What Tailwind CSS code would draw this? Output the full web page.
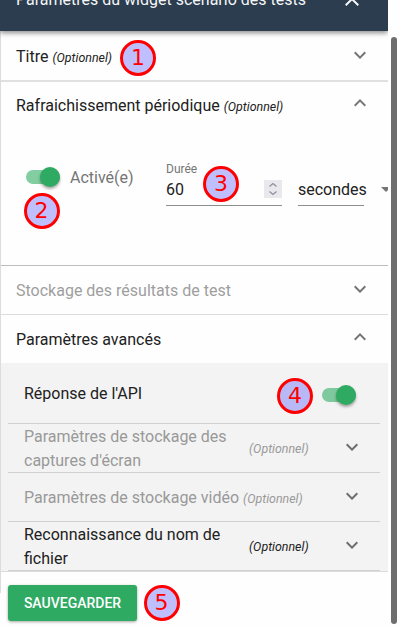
<!DOCTYPE html>
<html lang="fr">
<head>
<meta charset="utf-8">
<title>Paramètres du widget</title>
<script src="https://cdn.jsdelivr.net/npm/@tailwindcss/browser@4"></script>
</head>
<body class="bg-[#fefefe]">
<svg class="hidden">
  <symbol id="down" viewBox="0 0 24 24"><path d="M7.41 8.59 12 13.17l4.59-4.58L18 10l-6 6-6-6z"/></symbol>
  <symbol id="up" viewBox="0 0 24 24"><path d="M7.41 15.41 12 10.83l4.59 4.58L18 14l-6-6-6 6z"/></symbol>
</svg>
<div class="relative flex h-[627px] w-[400px] overflow-hidden font-['Roboto',sans-serif] text-base text-[#212121]">
  <div class="flex w-[388px] flex-col overflow-hidden">
    <header class="relative z-10 flex h-[31px] shrink-0 items-start justify-between bg-[#2b3d4f] pl-4 pr-[24px] text-[#f5f6f7] shadow-[0_2px_5px_rgba(0,0,0,.45)]">
      <h1 class="-mt-[12px] whitespace-nowrap text-base leading-6">Paramètres du widget scénario des tests</h1>
      <svg class="-mt-[13px] size-6 fill-current" viewBox="0 0 24 24"><path d="M19 6.41 17.59 5 12 10.59 6.41 5 5 6.41 10.59 12 5 17.59 6.41 19 12 13.41 17.59 19 19 17.59 13.41 12z"/></svg>
    </header>
    <main class="flex h-[562px] shrink-0 flex-col border-l border-[#dcdcdc]">
      <section class="flex h-[51px] shrink-0 items-center justify-between border-b-2 border-[#e0e0e0] pl-[15px] pr-4">
        <p class="pt-[3px]">Titre <i class="text-[12.4px] leading-4">(Optionnel)</i></p>
        <svg class="mb-px size-6 fill-[#757575]"><use href="#down"/></svg>
      </section>
      <section class="h-[184px] shrink-0 border-b border-[#bdbdbd] pl-[15px] pr-4">
        <div class="flex h-[46px] items-center justify-between">
          <p class="pt-[2px]">Rafraichissement périodique <i class="text-[12.4px] leading-4">(Optionnel)</i></p>
          <svg class="-mt-1 size-6 fill-[#757575]"><use href="#up"/></svg>
        </div>
        <div class="flex pt-[34px]">
          <div class="ml-[10px] mt-[5px] flex h-5 w-[140px] items-center">
            <span class="flex h-[14px] w-[34px] items-center justify-end rounded-full bg-[#82cda1]"><span class="size-5 shrink-0 rounded-full bg-[#2eaa62] shadow-[0_2px_3px_rgba(0,0,0,.35)]"></span></span>
            <span class="ml-[10px] pt-[2px] text-[#757575]">Activé(e)</span>
          </div>
          <div class="h-[44px] w-[116px] border-b border-[#8d8d8d]">
            <p class="text-xs leading-[14px] text-[#757575]">Durée</p>
            <div class="flex h-[26px] items-center justify-between"><span class="pt-[2px]">60</span>
              <svg class="h-[18px] w-[18px] bg-[#e9e9ed]" viewBox="0 0 18 18" fill="none" stroke="#8f8f9d" stroke-width="1.3"><path d="m5.5 6.5 3.5-3 3.5 3m-7 5 3.5 3 3.5-3"/></svg>
            </div>
          </div>
          <div class="ml-4 flex h-[44px] w-[66px] shrink-0 items-center border-b border-[#8d8d8d] pt-[12px]">
            <span class="pt-px">secondes</span>
            <svg class="ml-[14px] h-[5px] w-[10px] shrink-0 fill-[#757575]" viewBox="0 0 10 5"><path d="M0 0h10L5 5z"/></svg>
          </div>
        </div>
      </section>
      <section class="flex h-[49px] shrink-0 items-center justify-between border-b border-[#dcdcdc] pl-[15px] pr-4 text-[#9e9e9e]">
        <p class="pt-[2px]">Stockage des résultats de test</p>
        <svg class="mb-[2px] size-6 fill-[#757575]"><use href="#down"/></svg>
      </section>
      <section class="flex h-12 shrink-0 items-center justify-between pl-[15px] pr-4">
        <p class="pt-[2px]">Paramètres avancés</p>
        <svg class="-mt-1 size-6 fill-[#757575]"><use href="#up"/></svg>
      </section>
      <section class="h-[209px] shrink-0 border-b border-[#dcdcdc] bg-[#f3f3f3] pl-[7px] pr-2">
        <div class="flex h-[61px] items-center justify-between border-b border-[#d0d0d0] pl-4 pr-6">
          <p class="pt-[2px]">Réponse de l'API</p>
          <span class="mt-1 flex h-[14px] w-[34px] items-center justify-end rounded-full bg-[#7ec99d]"><span class="size-5 shrink-0 rounded-full bg-[#2eaa62] shadow-[0_2px_3px_rgba(0,0,0,.35)]"></span></span>
        </div>
        <div class="flex h-[49px] items-center border-b border-[#d0d0d0] pl-4 pr-4 text-[#999]">
          <p class="w-[225px] pt-[2px] leading-6">Paramètres de stockage des captures d'écran</p><i class="pt-[2px] text-[12.4px] leading-4">(Optionnel)</i>
          <svg class="mb-[2px] ml-auto size-6 fill-[#6d6d6d]"><use href="#down"/></svg>
        </div>
        <div class="flex h-[49px] items-center border-b border-[#d0d0d0] pl-4 pr-4 text-[#999]">
          <p class="whitespace-nowrap pt-[2px]">Paramètres de stockage vidéo <i class="text-[12.4px] leading-4">(Optionnel)</i></p>
          <svg class="mb-[2px] ml-auto size-6 fill-[#6d6d6d]"><use href="#down"/></svg>
        </div>
        <div class="flex h-[49px] items-center border-b border-[#d0d0d0] pl-4 pr-4">
          <p class="w-[225px] pt-[2px] leading-6">Reconnaissance du nom de fichier</p><i class="pt-[2px] text-[12.4px] leading-4">(Optionnel)</i>
          <svg class="mb-[2px] ml-auto size-6 fill-[#6d6d6d]"><use href="#down"/></svg>
        </div>
      </section>
    </main>
    <button class="relative -mt-2 ml-2 h-9 w-[129px] shrink-0 rounded-[3px] bg-[#2eaa62] text-sm font-medium text-white shadow-[0_1px_3px_rgba(0,0,0,.35)]">SAUVEGARDER</button>
  </div>
  <div class="ml-[3px] mt-[37px] h-[587px] w-[6px] rounded-full bg-[#6e6e6e]"></div>

  <span class="absolute left-[120px] top-[40px] z-20 flex size-9 items-center justify-center rounded-full border-[3px] border-[#f00] bg-[#bfbfff] font-['DejaVu_Sans'] text-[22px] leading-none text-[#f00]">1</span>
  <span class="absolute left-[23.5px] top-[192.5px] z-20 flex size-9 items-center justify-center rounded-full border-[3px] border-[#f00] bg-[#bfbfff] font-['DejaVu_Sans'] text-[22px] leading-none text-[#f00]">2</span>
  <span class="absolute left-[203px] top-[166px] z-20 flex size-9 items-center justify-center rounded-full border-[3px] border-[#f00] bg-[#bfbfff] font-['DejaVu_Sans'] text-[22px] leading-none text-[#f00]">3</span>
  <span class="absolute left-[277px] top-[377.5px] z-20 flex size-9 items-center justify-center rounded-full border-[3px] border-[#f00] bg-[#b8b8f6] font-['DejaVu_Sans'] text-[22px] leading-none text-[#f00]">4</span>
  <span class="absolute left-[143.5px] top-[585px] z-20 flex size-9 items-center justify-center rounded-full border-[3px] border-[#f00] bg-[#bfbfff] font-['DejaVu_Sans'] text-[22px] leading-none text-[#f00]">5</span>
</div>
</body>
</html>
